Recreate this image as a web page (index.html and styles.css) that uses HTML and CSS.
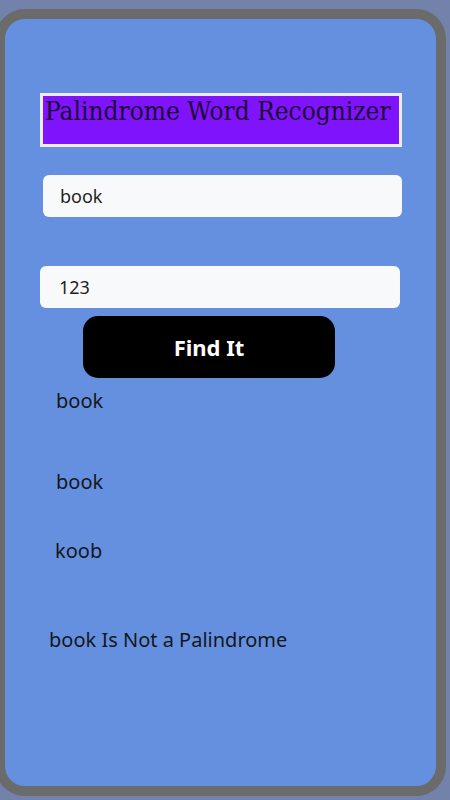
FILE: index.html
```html
<!DOCTYPE html>
<html lang="en">
<head>
    <meta charset="UTF-8">
    <meta name="viewport" content="width=device-width, initial-scale=1.0">
    <title>Palindrome Word Recognizer</title>
    <link rel="stylesheet" href="styles.css">
</head>
<body>

    <div class="phone">
        <h1>Palindrome Word Recognizer</h1>

        <input type="text" id="word" class="field field-word" value="book">
        <input type="text" id="extra" class="field field-extra" value="123">
        <button class="find-btn" onclick="findIt()">Find It</button>

        <p id="original" class="out out-first">book</p>
        <p id="copy" class="out out-second">book</p>
        <p id="reversed" class="out out-third">koob</p>
        <p id="result" class="out out-result">book Is Not a Palindrome</p>
    </div>

    <script>
        function findIt() {
            const word = document.getElementById("word").value;
            const reversed = word.split("").reverse().join("");

            document.getElementById("original").innerText = word;
            document.getElementById("copy").innerText = word;
            document.getElementById("reversed").innerText = reversed;

            if (word === reversed) {
                document.getElementById("result").innerText = `${word} Is a Palindrome`;
            } else {
                document.getElementById("result").innerText = `${word} Is Not a Palindrome`;
            }
        }
    </script>

</body>
</html>
```

FILE: styles.css
```css
body {
    margin: 0;
    padding: 0;
    background: #7282ab;
    font-family: "Noto Sans", "Open Sans", sans-serif;
    overflow: hidden;
}

.phone {
    width: 431px;
    height: 767px;
    margin: 9px 0 0 -5px;
    border: 10px solid #6b6b6b;
    border-radius: 30px;
    background: #6590df;
    overflow: hidden;
}

h1 {
    box-sizing: border-box;
    width: 362px;
    margin: 74px 0 0 35px;
    padding: 0 0 18px 2px;
    border: 3px solid #ececec;
    background: #7f13fc;
    color: #1d0a35;
    font-family: "DejaVu Serif", serif;
    font-stretch: condensed;
    font-size: 26px;
    font-weight: normal;
    line-height: 30px;
    white-space: nowrap;
}

.field {
    display: block;
    box-sizing: border-box;
    height: 42px;
    padding: 0 0 0 17px;
    border: none;
    border-radius: 6px;
    background: #f8f9fb;
    color: #1e1e1e;
    font-family: "Noto Sans", "Open Sans", sans-serif;
    font-size: 18px;
    outline: none;
}

.field-word {
    width: 359px;
    margin: 28px 0 0 38px;
}

.field-extra {
    width: 360px;
    margin: 49px 0 0 35px;
    padding-left: 19px;
}

.find-btn {
    display: block;
    width: 252px;
    height: 62px;
    margin: 8px 0 0 78px;
    border: none;
    border-radius: 15px;
    background: #000;
    color: #fff;
    font-family: "Noto Sans", "Open Sans", sans-serif;
    font-size: 22px;
    font-weight: bold;
    cursor: pointer;
}

.out {
    margin: 0;
    color: #141620;
    font-size: 20px;
    line-height: 28px;
}

.out-first {
    margin: 9px 0 0 51px;
}

.out-second {
    margin: 53px 0 0 51px;
}

.out-third {
    margin: 41px 0 0 50px;
}

.out-result {
    margin: 61px 0 0 44px;
}
```
